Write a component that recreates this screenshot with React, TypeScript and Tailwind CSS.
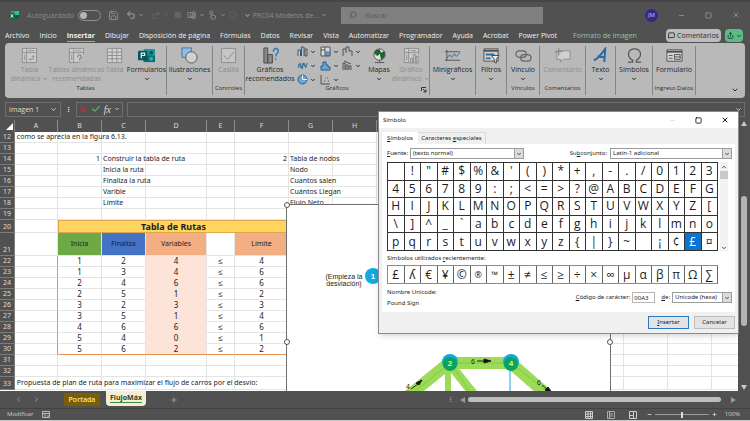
import { useState } from "react";
import type { ReactNode } from "react";
import {
    Check, ChevronDown, ChevronLeft, ChevronRight, ChevronUp, Circle, MessageSquare, Minus,
    MoreVertical, Plus, Save, Search, Share, Square, Undo2, Redo2, X,
} from "lucide-react";

const menuTabs = [
    "Archivo", "Inicio", "Insertar", "Dibujar", "Disposición de página", "Fórmulas", "Datos", "Revisar",
    "Vista", "Automatizar", "Programador", "Ayuda", "Acrobat", "Power Pivot", "Formato de imagen",
];

const symbols = [
    ..." !\"#$%&'()*+,-./0123",
    ..."456789:;<=>?@ABCDEFG",
    ..."HIJKLMNOPQRSTUVWXYZ[",
    ..."\\]^_`abcdefghijklmno",
    ..."pqrstuvwxyz{|}~\u00a0¡¢£¤",
];

const recentSymbols = [..."£ʎ€¥©®™±≠≤≥÷×∞µαβπΩ∑"];

const notes = [
    { row: 14, n1: "1", c: "Construir la tabla de ruta", n2: "2", g: "Tabla de nodos" },
    { row: 15, c: "Inicia la ruta", g: "Nodo" },
    { row: 16, c: "Finaliza la ruta", g: "Cuantos salen" },
    { row: 17, c: "Varible", g: "Cuántos Llegan" },
    { row: 18, c: "Límite", g: "Flujo Neto" },
    { row: 19 },
];

const routes = [
    [1, 2, 4, 4],
    [1, 3, 4, 6],
    [2, 4, 6, 6],
    [2, 5, 1, 2],
    [3, 2, 3, 3],
    [3, 5, 1, 4],
    [4, 6, 6, 6],
    [5, 4, 0, 1],
    [5, 6, 2, 2],
];

const columns = [
    { name: "A", w: "w-[43px]" }, { name: "B", w: "w-[44px]" }, { name: "C", w: "w-[44px]" },
    { name: "D", w: "w-[61px]" }, { name: "E", w: "w-[28px]" }, { name: "F", w: "w-[54px]" },
    { name: "G", w: "w-[44px]" }, { name: "H", w: "w-[44px]" }, { name: "I", w: "w-[71px]" },
    { name: "J", w: "w-[44px]" }, { name: "K", w: "w-[44px]" }, { name: "L", w: "w-[44px]" },
    { name: "M", w: "w-[44px]" }, { name: "N", w: "w-[44px]" }, { name: "O", w: "w-[44px]" },
    { name: "P", w: "w-[44px]" },
];

export default function App() {
    return (
        <div className="flex min-h-screen w-full flex-col overflow-hidden border-b border-[#c9c9c9] bg-[#515151] font-['Open_Sans','Noto_Sans',sans-serif] text-[7px] leading-[9px] text-white">
            <TitleBar />
            <MenuBar />
            <Ribbon />
            <FormulaBar />
            <div className="relative flex flex-1 flex-col">
                <Sheet />
                <SheetTabs />
                <SymbolDialog />
            </div>
            <StatusBar />
        </div>
    );
}

// small caret shown beside buttons that open a menu
function Caret() {
    return <ChevronDown size={6} strokeWidth={4} className="shrink-0" />;
}

function TitleBar() {
    const [autoSave, setAutoSave] = useState(false);
    return (
        <header className="flex h-7 items-center border-t-2 border-[#464646] text-[#8f8f8f]">
            <div className="flex w-[341px] shrink-0 items-center pl-2">
                <svg viewBox="0 0 12 12" className="h-3 w-3" aria-hidden="true">
                    <rect x="3" y="2" width="8" height="8" rx="1" fill="#185c37" />
                    <rect x="3" y="2" width="4" height="4" fill="#21a366" />
                    <rect x="7" y="2" width="4" height="4" fill="#33c481" />
                    <rect x="1" y="4" width="6" height="6" rx="1" fill="#0c6b39" />
                    <path d="M2.7 5.200 5.3 8.600M5.3 5.200 2.7 8.600" stroke="#dfe" strokeWidth="0.9" />
                </svg>
                <label className="ml-[7px] flex items-center gap-1 text-[#8a8a8a]">
                    Autoguardado
                    <span className="relative flex h-[11px] w-[23px] items-center">
                        <input
                            type="checkbox"
                            role="switch"
                            checked={autoSave}
                            onChange={() => setAutoSave(!autoSave)}
                            className="peer h-[11px] w-[23px] appearance-none rounded-full border border-[#8f8f8f]"
                        />
                        <span className="pointer-events-none absolute left-0.5 h-[7px] w-[7px] rounded-full bg-[#b5b5b5] peer-checked:left-3.5" />
                    </span>
                </label>
                <div className="ml-[7px] flex items-center gap-[3px]">
                    <button aria-label="Guardar"><Save size={11} /></button>
                    <button aria-label="Deshacer" className="ml-1 flex items-center gap-0.5">
                        <Undo2 size={10} strokeWidth={3} /><Caret />
                    </button>
                    <button aria-label="Rehacer" className="ml-1 flex items-center gap-0.5 text-[#606060]">
                        <Redo2 size={10} strokeWidth={3} /><Caret />
                    </button>
                    <button aria-label="Grabar" className="ml-0.5 text-[#646464]"><Circle size={8} fill="currentColor" /></button>
                    <button aria-label="Forma" className="ml-0.5 flex items-center gap-0.5">
                        <svg viewBox="0 0 12 12" className="h-2.5 w-2.5" fill="none" stroke="currentColor">
                            <path d="M1 3h6v6H1zM4 5h5v3H4zM8 1v3M10 2v8H6" />
                        </svg>
                        <Caret />
                    </button>
                    <button aria-label="Modo táctil" className="flex items-center gap-0.5">
                        <svg viewBox="0 0 12 12" className="h-2.5 w-2.5" fill="none" stroke="currentColor">
                            <circle cx="4" cy="3" r="2" />
                            <path d="M4 3v6l-1-1M4 6l5 1v3l-2 1H5L3 9" />
                        </svg>
                        <Caret />
                    </button>
                    <button aria-label="Seleccionar" className="text-[#616161]"><Square size={8} strokeDasharray="3" strokeWidth={3} /></button>
                    <button aria-label="Personalizar" className="ml-1"><ChevronDown size={7} strokeWidth={4} /></button>
                </div>
                <button className="ml-auto mr-3.5 flex items-center gap-0.5 whitespace-nowrap">
                    PRC04 Modelos de... <Caret />
                </button>
            </div>
            <label className="flex h-[17px] w-[202px] shrink items-center gap-2 bg-[#808080] px-2 text-[#5c5c5c]">
                <Search size={8} strokeWidth={3} className="shrink-0 -scale-x-100" />
                <input aria-label="Buscar" placeholder="Buscar" className="w-full bg-transparent text-[7px] outline-none placeholder:text-[#5a5a5a]" />
            </label>
            <div className="ml-auto flex items-center gap-5 pr-2.5">
                <button className="h-[13px] w-[13px] rounded-full bg-[#33298a] text-[6px] text-[#c5c2e4]">JM</button>
                <button aria-label="Minimizar"><Minus size={7} strokeWidth={3} /></button>
                <button aria-label="Maximizar"><Square size={7} strokeWidth={3} /></button>
                <button aria-label="Cerrar"><X size={8} strokeWidth={3} /></button>
            </div>
        </header>
    );
}

function MenuBar() {
    const [active, setActive] = useState("Insertar");
    return (
        <nav className="flex h-[15px] items-center pl-[5px] pr-[7px]">
            <div className="flex gap-2.5">
                {menuTabs.map((tab) => (
                    <button
                        key={tab}
                        onClick={() => setActive(tab)}
                        className={`h-[13px] whitespace-nowrap border-b ${
                            tab === active ? "border-[#79c59b] font-bold" : "border-transparent"
                        } ${tab === "Formato de imagen" ? "ml-1.5 text-[#8fc7aa]" : "text-[#f0f0f0]"}`}
                    >
                        {tab}
                    </button>
                ))}
            </div>
            <button className="ml-auto flex h-[13px] w-[55px] shrink-0 items-center justify-center gap-0.5 rounded-sm bg-[#bcbcbc] text-[#2e2e2e]">
                <MessageSquare size={7} strokeWidth={3} /> Comentarios
            </button>
            <button aria-label="Compartir" className="ml-1 flex h-[13px] w-[18px] shrink-0 items-center justify-center gap-0.5 rounded-sm bg-[#5cba83] text-[#1c4a30]">
                <Share size={7} strokeWidth={3} /> <Caret />
            </button>
        </nav>
    );
}

function Group({ label, width, children }: { label?: string; width: string; children: ReactNode }) {
    return (
        <section className={`my-[3px] flex shrink-0 flex-col border-r border-[#858585] ${width}`}>
            <div className="flex flex-1 justify-center">{children}</div>
            <h2 className="flex h-2.5 items-start justify-center whitespace-nowrap text-[6px] leading-[7px] text-[#2c2c2c]">{label}</h2>
        </section>
    );
}

type ToolProps = { icon: ReactNode; text: string; second?: string; width?: string; arrow?: boolean; off?: boolean };

function Tool({ icon, text, second, width = "w-full", arrow, off }: ToolProps) {
    return (
        <button disabled={off} className={`flex shrink-0 flex-col items-center ${width} ${off ? "text-[#8c8c8c]" : "text-[#262626]"}`}>
            <span className="flex h-[19px] items-center">{icon}</span>
            <span className="whitespace-nowrap">{text}</span>
            <span className="flex h-[9px] items-center gap-0.5 whitespace-nowrap">
                {second}
                {arrow && <Caret />}
            </span>
        </button>
    );
}

function Icon({ children }: { children: ReactNode }) {
    return (
        <svg viewBox="0 0 18 18" className="h-[17px] w-[17px]" fill="none" stroke="currentColor" aria-hidden="true">
            {children}
        </svg>
    );
}

const chartIcons = [
    <path key="1" d="M1 10V4h2.500v6M4.500 10V1H7v9M8 10V3h2v7z" fill="#a9cbe8" />,
    <g key="2"><path d="M1 1h9v9H1zM5 1v9M1 4h4" fill="#dcdcdc" /><path d="M6 6h3.500v3.500H6z" fill="#69a5d8" stroke="#2f78b7" /></g>,
    <path key="3" d="M1 10V3h3v4M4 3V1h3v4M7 5h3v5" />,
    <path key="4" d="m1 8 2-5 2 6 2-6 2 4 1-4M1 4l3 4 2-5 3 5" stroke="#3f7196" />,
    <path key="5" d="M1 10V6h2V2h3v3h2v2h2v3z" fill="#69a5d8" stroke="#225f94" />,
    <path key="6" d="M1 10V3h2v7M4 10V5h2v5M7 10V6h2v4M2 1l7 3" />,
    <g key="7"><circle cx="5.500" cy="5.500" r="4.500" fill="#69a5d8" stroke="#225f94" /><path d="M5.500 1v4.500H10" stroke="#eee" /></g>,
    <path key="8" d="M1 1v9h9M4 7h1M7 4h1M8 7h1M5 4h.5" />,
];

function Ribbon() {
    return (
        <div className="mx-[5px] flex h-[55px] rounded-[4px] bg-[#b9b9b9] text-[#2b2b2b]">
            <Group label="Tablas" width="w-[162px]">
                <Tool off width="w-[46px]" text="Tabla" second="dinámica" arrow icon={
                    <Icon><path d="M1.500 1.500h15v15h-15z" fill="#cdcdcd" /><path d="M2 6h14M6 2v14M8 4h6M4 8v6" /><path d="M9 13h4V9m-1.500 1.500L13 9l1.500 1.500M10.500 11.500 9 13l1.500 1.500" /></Icon>
                } />
                <Tool off width="w-[48px]" text="Tablas dinámicas" second="recomendadas" icon={
                    <Icon><path d="M11 16.500H1.500v-15h15V8" fill="#cdcdcd" /><path d="M2 6h14M6 2v14M8 4h6M4 8v6" /><path d="M10 11c0-4 5-3 4 0-1 1.500-2 1-2 3M12 15.500v1" strokeWidth="1.500" /></Icon>
                } />
                <Tool off width="w-[28px]" text="Tabla" icon={
                    <Icon><path d="M1.500 1.500h15v15h-15zM2 5.500h14M2 9h14M2 12.500h14M6.500 2v14M11.500 2v14" fill="#d3d3d3" /></Icon>
                } />
                <Tool width="w-[36px]" text="Formularios" arrow icon={
                    <Icon>
                        <g stroke="none">
                            <rect x="6" y="2" width="12" height="14" rx="1" fill="#27969a" />
                            <rect x="6" y="9" width="12" height="7" fill="#0d6d70" />
                            <circle cx="14" cy="6" r="2" fill="#0b5558" /><circle cx="14" cy="12.500" r="2" fill="#36b1b0" />
                            <rect x="0" y="4" width="10" height="10" rx="1" fill="#06575b" />
                        </g>
                        <path d="M3.500 12V6.500H7V9H3.500" stroke="#eee" strokeWidth="1.300" />
                    </Icon>
                } />
            </Group>
            <Group width="w-[46px]">
                <Tool text="Ilustraciones" arrow icon={
                    <Icon><path d="M1 1h10v10H1z" fill="#92bce0" stroke="#3c78ad" /><circle cx="11" cy="11" r="6" fill="#d2d2d2" stroke="#555" /></Icon>
                } />
            </Group>
            <Group label="Controles" width="w-[32px]">
                <Tool off text="Casilla" icon={<Icon><path d="M1.500 1.500h15v15h-15z" fill="#c6c6c6" /><path d="m4 9 4 4 7-8" /></Icon>} />
            </Group>
            <Group label="Gráficos" width="relative w-[185px]">
                <Tool width="w-[50px]" text="Gráficos" second="recomendados" icon={
                    <Icon><path d="M2 17V1h4v16zM6 17V8h5v9z" fill="#8a8a8a" stroke="#4a4a4a" /><path d="M12 5c0-5 6-4 5 0-.5 2-2.500 2-2.500 5M14.500 12v1.500" stroke="#2b7bbb" strokeWidth="1.500" /></Icon>
                } />
                <div className="grid w-[70px] shrink-0 grid-cols-3 content-start gap-y-[3px] pl-0.5">
                    {chartIcons.map((icon, i) => (
                        <button key={i} aria-label={`Insertar gráfico ${i + 1}`} className="flex h-[11px] items-center gap-0.5">
                            <svg viewBox="0 0 11 11" className="h-[11px] w-[11px]" fill="none" stroke="#505050">{icon}</svg>
                            <Caret />
                        </button>
                    ))}
                </div>
                <Tool width="w-[28px]" text="Mapas" arrow icon={
                    <Icon><circle cx="9" cy="8" r="6" fill="#dfe6df" stroke="#555" /><path d="m5 4 4-1 1 3-3 3-3-2zM10 7l4-2v5l-3 3z" fill="#1b6b2e" stroke="#174c25" /><path d="M4 16.500h10M9 14v2" stroke="#555" /></Icon>
                } />
                <Tool off width="w-[36px]" text="Gráfico" second="dinámico" arrow icon={
                    <Icon><path d="M8 16.500H1.500v-15h15V7" fill="#cdcdcd" /><path d="M2 6h14M6 2v14M8 4h6M4 8v6" /><path d="M8 17v-5h2v5zM11 17V8h2v9zM14 17v-7h2v7z" fill="#ccc" /></Icon>
                } />
                <button aria-label="Opciones de gráficos" className="absolute bottom-0.5 right-0.5">
                    <svg viewBox="0 0 6 6" className="h-1.5 w-1.5" fill="none" stroke="#333"><path d="M.5 4V.5H5M2 2l3 3M5 2.500V5H2.500" /></svg>
                </button>
            </Group>
            <Group width="w-[46px]">
                <Tool text="Minigráficos" arrow icon={
                    <Icon><path d="M3 3v12M1 5h16M1 14h16" stroke="#555" /><path d="m3 12 3-4 2 3 3-4 2 3 4-4" stroke="#2b6fa8" /></Icon>
                } />
            </Group>
            <Group width="w-[31px]">
                <Tool text="Filtros" arrow icon={
                    <Icon><path d="M1 2h15v13H1z" fill="#d2d2d2" stroke="#505050" /><path d="M1 4h15" stroke="#505050" strokeWidth="2" /><path d="M3 8h9M3 12h5" stroke="#2b6fa8" strokeWidth="2" /><path d="M9 9h8l-3 4v4l-2-1v-3z" fill="#eee" stroke="#444" /></Icon>
                } />
            </Group>
            <Group label="Vínculos" width="w-[33px]">
                <Tool text="Vínculo" arrow icon={
                    <Icon><rect x="1" y="4" width="11" height="7" rx="3.500" stroke="#666" strokeWidth="1.300" /><rect x="6" y="8" width="11" height="7" rx="3.500" stroke="#666" strokeWidth="1.300" /></Icon>
                } />
            </Group>
            <Group label="Comentarios" width="w-[46px]">
                <Tool off text="Comentario" icon={
                    <Icon><path d="M3 4h14v9H10l-3 3v-3H3z" fill="#d0d0d0" /><path d="M5 1v8M1 5h8" strokeWidth="1.300" /></Icon>
                } />
            </Group>
            <Group width="w-[30px]">
                <Tool text="Texto" arrow icon={
                    <Icon><path d="M2 14C6 13 10 7 14 2l-1 14M6 10l8 1" stroke="#2169a5" strokeWidth="2" /></Icon>
                } />
            </Group>
            <Group width="w-[37px]">
                <Tool text="Símbolos" arrow icon={
                    <Icon><path d="M2 16h5v-2C0 10 2 2 9 2s9 8 2 12v2h5" stroke="#555" strokeWidth="1.300" /></Icon>
                } />
            </Group>
            <Group label="Ingreso Datos" width="w-[43px]">
                <Tool text="Formulario" icon={
                    <Icon><path d="M1 3h16v12H1z" fill="#d5d5d5" stroke="#505050" /><path d="M1 5h16" stroke="#505050" strokeWidth="2" /><path d="M3 9h4M3 12h4M9 8h6v5H9zM9 10.500h6" stroke="#505050" /></Icon>
                } />
            </Group>
            <button aria-label="Contraer la cinta" className="mb-1 ml-auto mr-1.5 self-end"><ChevronDown size={8} strokeWidth={3} /></button>
        </div>
    );
}

function FormulaBar() {
    return (
        <div className="flex h-[22px] items-center gap-1 px-[5px] text-[#dedede]">
            <div className="flex h-[15px] w-[56px] items-center border border-[#6e6e6e] px-[3px]">
                <input aria-label="Cuadro de nombres" defaultValue="Imagen 1" className="w-full min-w-0 bg-transparent outline-none" />
                <ChevronDown size={7} strokeWidth={3} className="shrink-0" />
            </div>
            <MoreVertical size={7} strokeWidth={3} />
            <div className="flex h-[15px] w-[47px] items-center justify-between border border-[#6e6e6e] px-0.5">
                <button aria-label="Cancelar entrada" className="text-[#b13a3a]"><X size={9} strokeWidth={3} /></button>
                <button aria-label="Introducir" className="text-[#5fae70]"><Check size={10} strokeWidth={3} /></button>
                <button aria-label="Insertar función" className="font-['Liberation_Serif',serif] text-[10px] italic">fx</button>
                <ChevronDown size={6} strokeWidth={3} />
            </div>
            <div className="flex h-[15px] min-w-0 flex-1 items-center border border-[#6e6e6e] pr-0.5">
                <input aria-label="Barra de fórmulas" className="w-full bg-transparent outline-none" />
                <ChevronDown size={7} strokeWidth={3} className="shrink-0" />
            </div>
        </div>
    );
}

function RowHead({ n }: { n: number }) {
    return (
        <th scope="row" className="border-b border-r border-[#7c7c7c] bg-[#515151] p-0 text-center align-bottom text-[7px] font-normal leading-[10px] text-[#dcdcdc]">
            {n}
        </th>
    );
}

function Cell({ children, className = "" }: { children?: ReactNode; className?: string }) {
    return <td className={`whitespace-nowrap border-b border-r border-[#e4e4e4] p-0 ${className}`}>{children}</td>;
}

function Blank({ count }: { count: number }) {
    return <>{Array.from({ length: count }).map((_, i) => <Cell key={i} />)}</>;
}

function Sheet() {
    return (
        <div className="flex font-['Noto_Sans',sans-serif]">
            <div className="relative h-[271px] min-w-0 flex-1 overflow-hidden bg-white text-[#1d1d1d]">
                <table className="w-[756px] table-fixed border-separate border-spacing-0 text-[7px] leading-[10px]">
                    <colgroup>
                        <col className="w-[15px]" />
                        {columns.map((c) => <col key={c.name} className={c.w} />)}
                    </colgroup>
                    <thead>
                        <tr className="h-3 bg-[#515151] text-[#dcdcdc]">
                            <th className="border-r border-[#7c7c7c] p-0">
                                <svg viewBox="0 0 8 8" className="ml-auto mr-px h-[7px] w-[7px]"><path d="M8 0v8H0z" fill="#fff" /></svg>
                            </th>
                            {columns.map((c) => (
                                <th key={c.name} scope="col" className="border-r border-[#8c8c8c] p-0 font-normal">{c.name}</th>
                            ))}
                        </tr>
                    </thead>
                    <tbody>
                        <tr className="h-[11px]">
                            <RowHead n={12} />
                            <Cell>&nbsp;como se aprecia en la figura 6.13.</Cell>
                            <Blank count={15} />
                        </tr>
                        <tr className="h-[11px]"><RowHead n={13} /><Blank count={16} /></tr>
                        {notes.map((n) => (
                            <tr key={n.row} className="h-[11px]">
                                <RowHead n={n.row} />
                                <Cell />
                                <Cell className="pr-px text-right">{n.n1}</Cell>
                                <Cell className="pl-px">{n.c}</Cell>
                                <Blank count={2} />
                                <Cell className="pr-px text-right">{n.n2}</Cell>
                                <Cell className="pl-px">{n.g}</Cell>
                                <Blank count={9} />
                            </tr>
                        ))}
                        <tr className="h-[13px]">
                            <RowHead n={20} />
                            <Cell />
                            <td colSpan={5} className="border border-[#e0a64a] bg-[#ffd55f] p-0 text-center text-[9px] font-bold">Tabla de Rutas</td>
                            <Blank count={10} />
                        </tr>
                        <tr className="h-[23px] text-center">
                            <RowHead n={21} />
                            <Cell />
                            <Cell className="bg-[#6daa45]">Inicia</Cell>
                            <Cell className="bg-[#4472c4]">Finaliza</Cell>
                            <Cell className="bg-[#f3ae84]">Variables</Cell>
                            <Cell />
                            <Cell className="bg-[#f3ae84]">Límite</Cell>
                            <Blank count={10} />
                        </tr>
                        {routes.map(([from, to, flow, limit], i) => {
                            const edge = i === routes.length - 1 ? "border-b-[#e9914e]" : "";
                            return (
                                <tr key={i} className="h-[11px] text-center text-[8px]">
                                    <RowHead n={22 + i} />
                                    <Cell className="border-r-[#e9914e]" />
                                    <Cell className={edge}>{from}</Cell>
                                    <Cell className={edge}>{to}</Cell>
                                    <Cell className={`bg-[#fce4d8] ${edge || "border-b-[#fce4d8]"}`}>{flow}</Cell>
                                    <Cell className={edge}>≤</Cell>
                                    <Cell className={edge}>{limit}</Cell>
                                    <Blank count={10} />
                                </tr>
                            );
                        })}
                        <tr className="h-[11px]"><RowHead n={31} /><Blank count={16} /></tr>
                        <tr className="h-[11px]"><RowHead n={32} /><Blank count={16} /></tr>
                        <tr className="h-[13px]">
                            <RowHead n={33} />
                            <Cell>&nbsp;Propuesta de plan de ruta para maximizar el flujo de carros por el desvío:</Cell>
                            <Blank count={15} />
                        </tr>
                    </tbody>
                </table>
                <Diagram />
            </div>
            <div className="flex w-3 flex-col items-center text-[#c8c8c8]">
                <Arrow d="M4 1 7 6H1z" />
                <div className="mt-[68px] h-[130px] w-1.5 rounded-sm bg-[#b4b4b4]" />
                <div className="mt-auto"><Arrow d="M1 2h6L4 7z" /></div>
            </div>
        </div>
    );
}

function Arrow({ d }: { d: string }) {
    return <svg viewBox="0 0 8 8" className="h-2 w-2 shrink-0" fill="currentColor" aria-hidden="true"><path d={d} /></svg>;
}

function Diagram() {
    return (
        <div className="absolute bottom-0 left-[286px] top-[84px] w-[325px] border border-b-0 border-[#6f6f6f] bg-white">
            <svg viewBox="0 0 323 186" className="h-[186px] w-[323px]">
                <g fill="none" stroke="#9cdb58" strokeWidth="12">
                    <path d="M163 158h62" />
                    <path d="m162 158-52 42M226 160l46 40" />
                    <path d="M161 160v30" strokeWidth="6" />
                    <path d="m165 162 24 30" strokeWidth="9" />
                </g>
                <path d="M163 158h60M163 158l-50 40M224 158l46 36M165 160l20 30" stroke="#6fb53a" strokeWidth="0.500" fill="none" />
                <path d="M223 164v22" stroke="#1ba7e0" />
                <g stroke="#111" strokeWidth="0.900" fill="#111">
                    <path d="M190 156h9" /><path d="m197 154 7 2-7 2z" />
                    <path d="m124 184 7-5" /><path d="m129 178 6-3-3 5z" />
                    <path d="m255 180 6 5" /><path d="m261 182 4 6-7-3z" />
                </g>
                <g fontFamily="'Liberation Sans', sans-serif" fontSize="7" fill="#222" textAnchor="middle">
                    <text x="186" y="159">6</text>
                    <text x="121" y="184">4</text>
                    <text x="252" y="180">6</text>
                    <text x="57" y="74">(Empieza la</text>
                    <text x="57" y="81">desviación)</text>
                </g>
                <circle cx="86" cy="71" r="8" fill="#12a8e0" />
                <circle cx="147" cy="121" r="8" fill="#1287c4" />
                <circle cx="208" cy="121" r="8" fill="#1287c4" />
                <circle cx="163" cy="157" r="8" fill="#12a8e0" /><circle cx="163" cy="159" r="7" fill="#0ba35a" />
                <circle cx="224" cy="157" r="8" fill="#12a8e0" /><circle cx="224" cy="159" r="7" fill="#0ba35a" />
                <g fontFamily="'Liberation Sans', sans-serif" fontSize="8" fontWeight="bold" fill="#d9f59b" textAnchor="middle">
                    <text x="86" y="74" fill="#fff">1</text>
                    <text x="163" y="161">2</text>
                    <text x="224" y="161">4</text>
                </g>
            </svg>
            <span className="absolute -left-[3px] -top-[3px] h-[6px] w-[6px] rounded-full border border-[#555] bg-white" />
            <span className="absolute -left-[3px] top-[134px] h-[6px] w-[6px] rounded-full border border-[#555] bg-white" />
            <span className="absolute -right-[3px] top-[134px] h-[6px] w-[6px] rounded-full border border-[#555] bg-white" />
        </div>
    );
}

function SheetTabs() {
    return (
        <div className="flex h-[17px] items-center pl-[15px] text-[#9a9a9a]">
            <button aria-label="Hoja anterior"><ChevronLeft size={7} strokeWidth={3} /></button>
            <button aria-label="Hoja siguiente" className="ml-[11px]"><ChevronRight size={7} strokeWidth={3} /></button>
            <button className="ml-6 h-[13px] w-9 bg-[#7b5d05] font-semibold text-[#f5e3a2]">Portada</button>
            <button className="ml-1.5 h-[15px] w-10 self-start rounded-b-sm bg-[#f3efd3] pb-0.5 font-bold text-[#3b3b1c]">
                <span className="border-b border-[#3c8c3a]">FlujoMáx</span>
            </button>
            <button aria-label="Hoja nueva" className="ml-6"><Plus size={8} strokeWidth={3} /></button>
            <div className="ml-auto flex w-[303px] items-center">
                <MoreVertical size={7} strokeWidth={3} />
                <span className="ml-1"><Arrow d="M7 1v6L2 4z" /></span>
                <div className="mx-0.5 h-[5px] w-[253px] rounded-sm bg-[#bdbdbd]" />
                <span className="ml-1.5"><Arrow d="M2 1v6l5-3z" /></span>
            </div>
        </div>
    );
}

function StatusBar() {
    const [zoom, setZoom] = useState(50);
    return (
        <footer className="flex h-3 items-center border-t border-[#424242] pl-[7px] pr-2.5 text-[#cfcfcf]">
            <span className="text-[6px]">Modificar</span>
            <svg viewBox="0 0 8 8" className="ml-[9px] h-2 w-2" fill="none" stroke="#bbb"><path d="M.5.5h7v6h-7zM.5 2.500h7M3 2v5M5 5h2" /></svg>
            <div className="ml-auto flex items-center gap-3.5">
                <button aria-label="Normal"><svg viewBox="0 0 8 8" className="h-2 w-2" fill="none" stroke="#ccc"><path d="M.5.5h7v7h-7zM.5 3h7M.5 5.500h7M3 .5v7M5.500.5v7" /></svg></button>
                <button aria-label="Diseño de página"><svg viewBox="0 0 8 8" className="h-2 w-2" fill="none" stroke="#aaa"><path d="M.5.5h7v7h-7zM2 3h4M2 5h4M2.500 1v6" /></svg></button>
                <button aria-label="Salto de página"><svg viewBox="0 0 8 8" className="h-2 w-2" fill="none" stroke="#ccc"><path d="M.5.5h7v7h-7zM.5 4.500h4v-4M4.500 4.500v3" /></svg></button>
            </div>
            <div className="ml-2.5 flex items-center gap-[3px]">
                <Minus size={5} strokeWidth={4} />
                <input
                    type="range"
                    aria-label="Zoom"
                    value={zoom}
                    onChange={(e) => setZoom(Number(e.target.value))}
                    className="h-px w-[54px] appearance-none bg-[#9a9a9a] [&::-webkit-slider-thumb]:h-1.5 [&::-webkit-slider-thumb]:w-0.5 [&::-webkit-slider-thumb]:appearance-none [&::-webkit-slider-thumb]:bg-[#ddd]"
                />
                <Plus size={5} strokeWidth={4} />
            </div>
            <span className="ml-2 text-[6px]">100%</span>
        </footer>
    );
}

function Combo({ id, value, width }: { id: string; value: string; width: string }) {
    return (
        <span className={`relative flex h-[11px] ${width}`}>
            <select id={id} className="w-full appearance-none border border-[#9c9c9c] bg-white pl-0.5 text-[6px] leading-[9px]">
                <option>{value}</option>
            </select>
            <span className="pointer-events-none absolute right-0 top-0 flex h-[11px] w-2.5 items-center justify-center border border-[#9c9c9c] bg-[#dcdcdc]">
                <ChevronDown size={6} strokeWidth={3} />
            </span>
        </span>
    );
}

function SymbolDialog() {
    const [selected, setSelected] = useState("£");
    return (
        <div role="dialog" aria-label="Símbolo" className="absolute -top-[9px] right-[11px] flex w-[361px] flex-col border border-[#8a8a8a] bg-[#f0f0f0] font-['Noto_Sans',sans-serif] text-[6px] text-[#1c1c1c] shadow-md">
            <div className="flex h-4 items-center bg-white pl-1 pr-[9px]">
                <h1 className="text-[6px]">Símbolo</h1>
                <div className="ml-auto flex items-center gap-[19px]">
                    <Minus size={7} className="text-[#d0d0d0]" />
                    <button aria-label="Maximizar"><Square size={7} strokeWidth={3} /></button>
                    <button aria-label="Cerrar"><X size={8} strokeWidth={3} /></button>
                </div>
            </div>
            <div role="tablist" className="mt-1 flex h-3 items-stretch pl-[3px]">
                <button role="tab" aria-selected="true" className="w-9 bg-white"><u>S</u>ímbolos</button>
                <button role="tab" aria-selected="false" className="w-[68px] border-r border-t border-[#dadada]">Caracteres <u>e</u>speciales</button>
            </div>
            <div className="mx-[3px] bg-white pb-1 pl-[5px] pr-[3px]">
                <div className="flex items-center pt-1">
                    <label htmlFor="fuente" className="w-[23px] whitespace-nowrap"><u>F</u>uente:</label>
                    <Combo id="fuente" value="(texto normal)" width="w-[114px]" />
                    <label htmlFor="subconjunto" className="ml-auto mr-[3px]">Su<u>b</u>conjunto:</label>
                    <Combo id="subconjunto" value="Latín-1 adicional" width="w-[122px]" />
                </div>
                <div className="mt-[3px] flex gap-0.5">
                    <div className="grid h-[89px] w-[331px] grid-cols-20 grid-rows-5 border-l border-t border-[#333] font-['Open_Sans','Noto_Sans',sans-serif] text-[12px] leading-none">
                        {symbols.map((s, i) => (
                            <button
                                key={i}
                                onClick={() => setSelected(s)}
                                className={`border-b border-r border-[#333] ${s === selected ? "bg-[#0b74d1] text-white" : ""}`}
                            >
                                {s}
                            </button>
                        ))}
                    </div>
                    <div className="flex w-2 flex-col items-center bg-[#f2f2f2] pt-0.5">
                        <ChevronUp size={6} strokeWidth={3} />
                        <div className="mt-px h-2 w-full bg-[#c9c9c9]" />
                        <ChevronDown size={6} strokeWidth={3} className="mt-auto" />
                    </div>
                </div>
                <p className="mt-[3px]">Símbolos utilizados <u>r</u>ecientemente:</p>
                <div className="mt-0.5 grid h-[19px] w-[331px] grid-cols-20 border border-r-0 border-[#8b8b8b] font-['Open_Sans','Noto_Sans',sans-serif] text-[12px] leading-none">
                    {recentSymbols.map((s) => (
                        <button key={s} onClick={() => setSelected(s)} className={`border-r border-[#666] ${s === "®" || s === "™" ? "text-[9px]" : ""}`}>{s}</button>
                    ))}
                </div>
                <div className="mt-1 flex justify-between">
                    <div>
                        <p>Nombre Unicode:</p>
                        <p className="mt-0.5">Pound Sign</p>
                    </div>
                    <div className="mt-1 flex h-[11px] items-center">
                        <label htmlFor="codigo"><u>C</u>ódigo de carácter:</label>
                        <input id="codigo" defaultValue="00A3" className="ml-0.5 h-[11px] w-[23px] border border-[#b5b5b5] px-px" />
                        <label htmlFor="de" className="ml-1.5 mr-0.5"><u>d</u>e:</label>
                        <Combo id="de" value="Unicode (hexa)" width="w-[60px]" />
                    </div>
                </div>
            </div>
            <div className="flex justify-end gap-[5px] px-[3px] py-1">
                <button className="h-[13px] w-[41px] border border-[#2b7ac0] bg-[#e3e3e3]"><u>I</u>nsertar</button>
                <button className="h-[13px] w-[41px] border border-[#bdbdbd] bg-[#e3e3e3]">Cancelar</button>
            </div>
        </div>
    );
}
